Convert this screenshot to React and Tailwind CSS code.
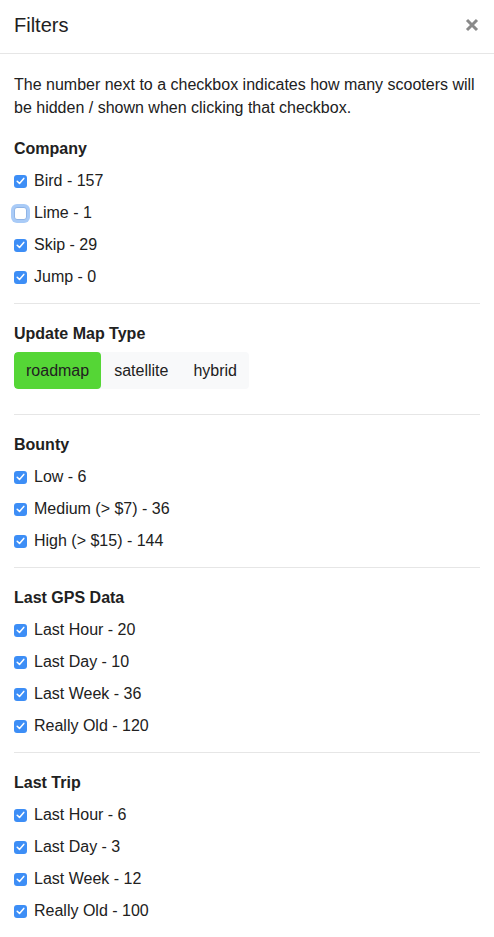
import React from "react";

function Check({ checked }) {
  if (!checked) {
    return (
      <span className="w-[13px] h-[13px] shrink-0 rounded-[3px] bg-white border border-[#8fb4e6] ring-[3px] ring-[#a9cbf7]" />
    );
  }
  return (
    <span className="w-[13px] h-[13px] shrink-0 rounded-[3px] bg-[#3d8ef6] flex items-center justify-center">
      <svg width="9" height="8" viewBox="0 0 9 8" fill="none">
        <path d="M1.2 4.2 L3.5 6.4 L7.8 1.4" stroke="white" strokeWidth="1.5" strokeLinecap="round" strokeLinejoin="round" />
      </svg>
    </span>
  );
}

function Row({ label, checked = true }) {
  return (
    <div className="h-8 flex items-center gap-[7px]">
      <Check checked={checked} />
      <span>{label}</span>
    </div>
  );
}

function Section({ title, items, first }) {
  return (
    <div className={first ? "" : "border-t border-[#e6e6e6] pt-[18px]"}>
      <div className="font-bold leading-6 mb-1">{title}</div>
      {items.map((it) => (
        <Row key={it.label} label={it.label} checked={it.checked !== false} />
      ))}
    </div>
  );
}

export default function App() {
  return (
    <div
      className="w-[494px] h-[937px] bg-white text-[#212121] text-[16px] overflow-hidden"
      style={{ fontFamily: '"Liberation Sans", Arial, sans-serif' }}
    >
      <div className="h-[54px] border-b border-[#e6e6e6] flex items-center justify-between pl-[14px] pr-[15px] pb-[3px]">
        <div className="text-[20px] leading-6">Filters</div>
        <svg width="14" height="14" viewBox="0 0 14 14">
          <path d="M2 2 L12 12 M12 2 L2 12" stroke="#8a8a8a" strokeWidth="3" strokeLinecap="butt" />
        </svg>
      </div>
      <div className="px-[14px] pt-[19px]">
        <p className="leading-[23px] mb-[18px]">
          The number next to a checkbox indicates how many scooters will be hidden / shown when clicking that checkbox.
        </p>
        <Section
          first
          title="Company"
          items={[
            { label: "Bird - 157" },
            { label: "Lime - 1", checked: false },
            { label: "Skip - 29" },
            { label: "Jump - 0" },
          ]}
        />
        <div className="mt-[10px] border-t border-[#e6e6e6] pt-[18px] pb-[25px]">
          <div className="font-bold leading-6">Update Map Type</div>
          <div className="mt-[6px] inline-flex h-[37px] rounded-[4px] bg-[#f8f9fa] overflow-hidden">
            <div className="bg-[#55d636] px-[12px] flex items-center rounded-[4px]">roadmap</div>
            <div className="px-[13px] flex items-center">satellite</div>
            <div className="px-[12px] flex items-center">hybrid</div>
          </div>
        </div>
        <Section
          title="Bounty"
          items={[
            { label: "Low - 6" },
            { label: "Medium (> $7) - 36" },
            { label: "High (> $15) - 144" },
          ]}
        />
        <div className="mt-[10px]">
          <Section
            title="Last GPS Data"
            items={[
              { label: "Last Hour - 20" },
              { label: "Last Day - 10" },
              { label: "Last Week - 36" },
              { label: "Really Old - 120" },
            ]}
          />
        </div>
        <div className="mt-[10px]">
          <Section
            title="Last Trip"
            items={[
              { label: "Last Hour - 6" },
              { label: "Last Day - 3" },
              { label: "Last Week - 12" },
              { label: "Really Old - 100" },
            ]}
          />
        </div>
      </div>
    </div>
  );
}
